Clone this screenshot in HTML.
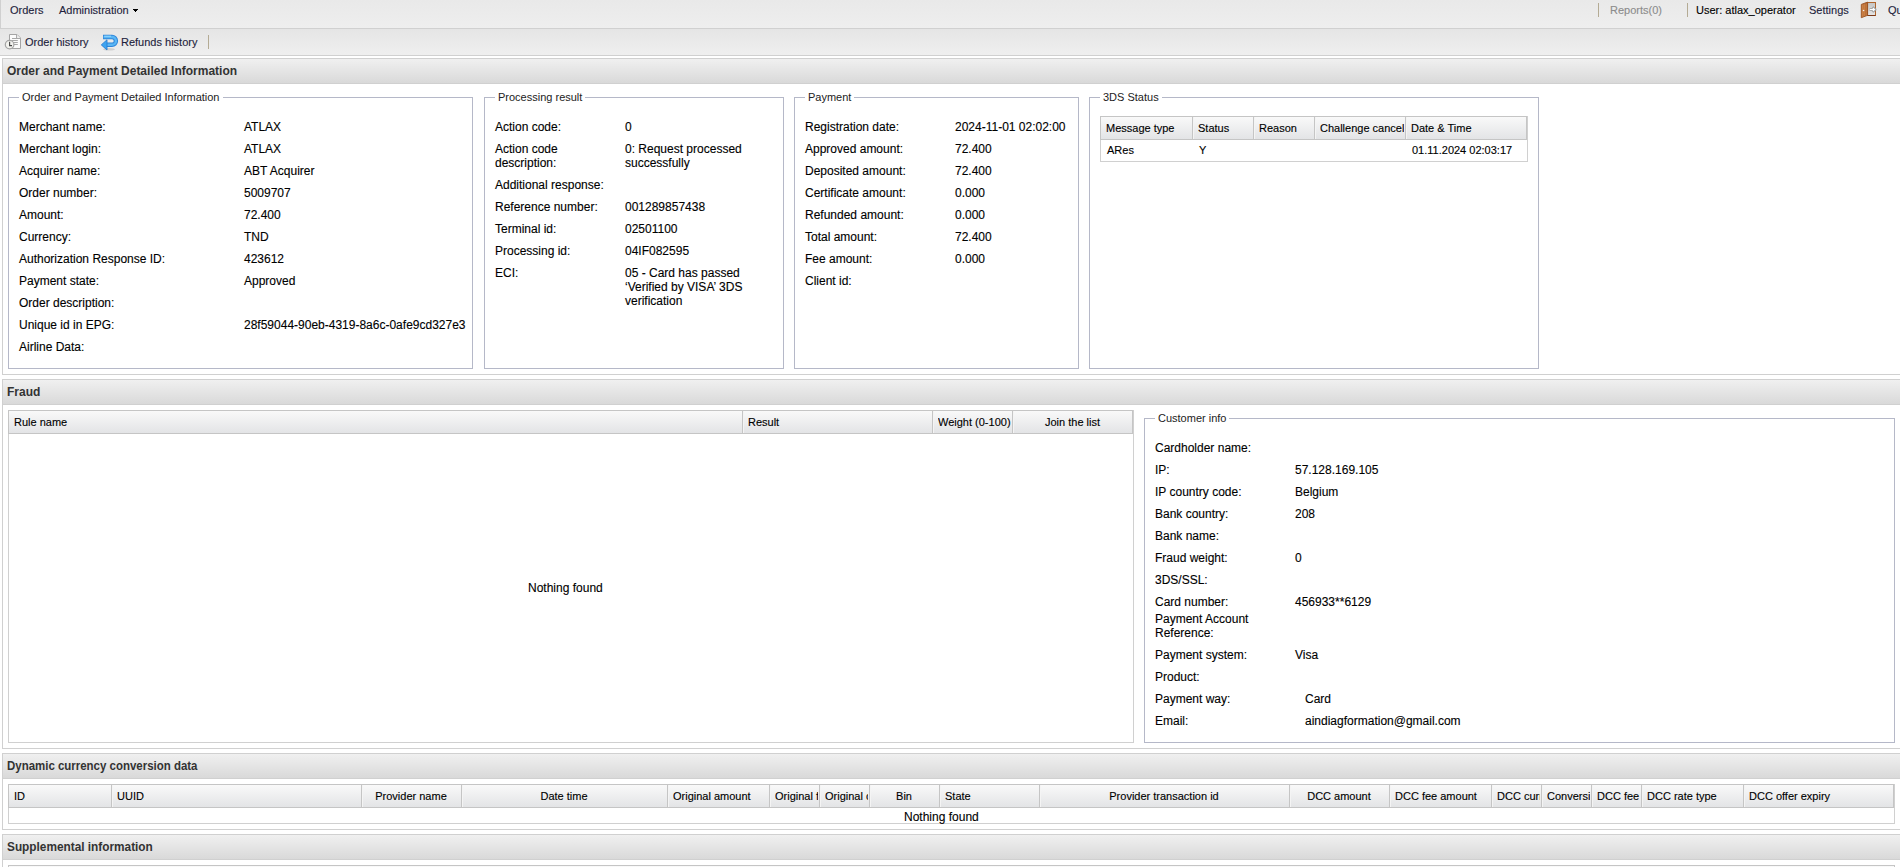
<!DOCTYPE html>
<html><head><meta charset="utf-8">
<style>
*{margin:0;padding:0;box-sizing:border-box}
html,body{width:1900px;height:867px;overflow:hidden;background:#fff;font-family:"Liberation Sans",sans-serif;font-size:12px;color:#000}
.a{position:absolute}
.t{position:absolute;white-space:nowrap;line-height:14px;font-size:12px;margin-top:-2px}
.s{position:absolute;white-space:nowrap;line-height:13px;font-size:11px;margin-top:-2px}
#menu{left:0;top:0;width:1900px;height:29px;background:linear-gradient(#e9e9e9,#eeeeee);border-left:1px solid #d0d0d0;border-bottom:1px solid #d0d0d0}
#tb{left:0;top:29px;width:1900px;height:27px;background:linear-gradient(#e5e5e5,#efefef);border-bottom:1px solid #d0d0d0}
.mt{color:#1e1e3c}
.pnl{position:absolute;left:2px;width:1898px;border:1px solid #d0d0d0;border-right:none;background:#fff}
.ph{position:absolute;left:0;top:0;right:0;height:25px;background:linear-gradient(#f0f0f0,#d9d9d9);border-bottom:1px solid #d0d0d0}
.ph span{position:absolute;left:4px;top:5px;font-weight:bold;font-size:12px;line-height:14px;color:#333;white-space:nowrap;transform-origin:0 0}
.fs{position:absolute;border:1px solid #b5b8c8}
.lg{position:absolute;background:#fff;padding:0 3px;font-size:11px;line-height:13px;color:#222;white-space:nowrap;margin-top:-3px}
.gh{position:absolute;background:linear-gradient(#f9f9f9,#e3e4e6);border:1px solid #c5c5c5}
.gb{position:absolute;border:1px solid #d0d0d0;background:#fff}
.cs{position:absolute;top:0;bottom:0;width:2px;border-left:1px solid #c5c5c5;border-right:1px solid #f4f4f4}
.t,.s{-webkit-text-stroke:0.12px currentColor}
.clip{position:absolute;overflow:hidden;height:16px}
.clip div{position:static;margin-top:0;padding-top:0}
</style></head><body>
<div id="menu" class="a"></div>
<div class="s mt" style="left:10px;top:6px;">Orders</div>
<div class="s mt" style="left:59px;top:6px;">Administration</div>
<div class="a" style="left:133px;top:9px;width:5px;height:1px;background:#000"></div><div class="a" style="left:134px;top:10px;width:3px;height:1px;background:#000"></div><div class="a" style="left:135px;top:11px;width:1px;height:1px;background:#000"></div>
<div class="a" style="left:1598px;top:3px;width:1px;height:14px;background:#b4ab94"></div>
<div class="s" style="left:1610px;top:6px;color:#8c8c8c">Reports(0)</div>
<div class="a" style="left:1687px;top:3px;width:1px;height:14px;background:#b4ab94"></div>
<div class="s" style="left:1696px;top:6px;color:#000">User: atlax_operator</div>
<div class="s mt" style="left:1809px;top:6px;">Settings</div>
<svg class="a" style="left:1860px;top:0px" width="18" height="20" viewBox="0 0 18 20">
 <defs><linearGradient id="fr" x1="0" y1="0" x2="0" y2="1"><stop offset="0" stop-color="#c4c4c4"/><stop offset="1" stop-color="#e6e6e6"/></linearGradient>
 <linearGradient id="dr" x1="0" y1="0" x2="1" y2="0"><stop offset="0" stop-color="#c87c42"/><stop offset="1" stop-color="#a85e2a"/></linearGradient></defs>
 <rect x="7.5" y="2.5" width="8" height="13" fill="url(#fr)" stroke="#b0652c"/>
 <path d="M7.5 15.5 H15.5" stroke="#7a3a1a"/>
 <path d="M1.3 4.4 L7.6 2.1 L7.6 15.3 L1.3 17.7 Z" fill="url(#dr)" stroke="#9a5224" stroke-width="0.9"/>
 <path d="M2.9 5 V16.6 M4.6 4.3 V16 M6.2 3.7 V15.5" stroke="#d89050" stroke-width="0.6"/>
 <circle cx="3.6" cy="10.5" r="0.8" fill="#f0f0f0"/>
 <path d="M9.6 9.5 H13.6 M12.4 7.3 L15.2 9.5 L12.4 11.7" stroke="#9c9c9c" stroke-width="2.6" fill="none" stroke-linejoin="round"/>
 <path d="M9.8 9.5 H14.4 M12.8 8 L14.6 9.5 L12.8 11" stroke="#ffffff" stroke-width="1.1" fill="none"/>
</svg>
<div class="s mt" style="left:1888px;top:6px;">Quit</div>
<div id="tb" class="a"></div>
<svg class="a" style="left:0px;top:30px" width="24" height="24" viewBox="0 0 24 24">
 <path d="M9.5 4.5 H17 L20.5 8 V18.5 H9.5 Z" fill="#fbfbfb" stroke="#a4a4a4"/>
 <path d="M16.6 4.5 V8.5 H20.5" fill="#f0f0f0" stroke="#a4a4a4"/>
 <path d="M12 8.5 H20 M12 10.5 H17.8 M13 12.5 H17.8 M14 14.5 H17.8" stroke="#a8a8a8"/>
 <circle cx="9.6" cy="14.6" r="4.3" fill="#f2f2ee" stroke="#a4a4a4" stroke-width="1.2"/>
 <path d="M9.6 11.8 V15.6 H12" stroke="#484848" stroke-width="1.15" fill="none"/>
</svg>
<div class="s mt" style="left:25px;top:38px;">Order history</div>
<svg class="a" style="left:98px;top:30px" width="24" height="24" viewBox="0 0 24 24">
 <ellipse cx="11" cy="19.3" rx="6" ry="1.2" fill="#000" opacity="0.12"/>
 <path d="M5 7 H14 A3.9 3.9 0 0 1 14 14.8 H8" stroke="#2f86da" stroke-width="4.4" fill="none"/>
 <path d="M5.6 7 H14 A3.9 3.9 0 0 1 14 14.8 H8" stroke="#5ab6f4" stroke-width="2.4" fill="none"/>
 <path d="M3.3 14.9 L9 9.8 L9 20 Z" fill="#3ea4f0" stroke="#2b7fd2" stroke-width="0.9" stroke-linejoin="round"/>
 <path d="M6.2 6.2 H13" stroke="#9ddcff" stroke-width="1" fill="none"/>
</svg>
<div class="s mt" style="left:121px;top:38px;">Refunds history</div>
<div class="a" style="left:208px;top:35px;width:1px;height:14px;background:#b4ab94"></div>
<div class="pnl" style="top:58px;height:317px"><div class="ph"><span>Order and Payment Detailed Information</span></div></div>
<div class="fs" style="left:8px;top:97px;width:465px;height:272px"></div>
<div class="lg" style="left:19px;top:94px">Order and Payment Detailed Information</div>
<div class="t" style="left:19px;top:122px;">Merchant name:</div>
<div class="t" style="left:244px;top:122px;">ATLAX</div>
<div class="t" style="left:19px;top:144px;">Merchant login:</div>
<div class="t" style="left:244px;top:144px;">ATLAX</div>
<div class="t" style="left:19px;top:166px;">Acquirer name:</div>
<div class="t" style="left:244px;top:166px;">ABT Acquirer</div>
<div class="t" style="left:19px;top:188px;">Order number:</div>
<div class="t" style="left:244px;top:188px;">5009707</div>
<div class="t" style="left:19px;top:210px;">Amount:</div>
<div class="t" style="left:244px;top:210px;">72.400</div>
<div class="t" style="left:19px;top:232px;">Currency:</div>
<div class="t" style="left:244px;top:232px;">TND</div>
<div class="t" style="left:19px;top:254px;">Authorization Response ID:</div>
<div class="t" style="left:244px;top:254px;">423612</div>
<div class="t" style="left:19px;top:276px;">Payment state:</div>
<div class="t" style="left:244px;top:276px;">Approved</div>
<div class="t" style="left:19px;top:298px;">Order description:</div>
<div class="t" style="left:19px;top:320px;">Unique id in EPG:</div>
<div class="t" style="left:244px;top:320px;">28f59044-90eb-4319-8a6c-0afe9cd327e3</div>
<div class="t" style="left:19px;top:342px;">Airline Data:</div>
<div class="fs" style="left:484px;top:97px;width:300px;height:272px"></div>
<div class="lg" style="left:495px;top:94px">Processing result</div>
<div class="t" style="left:495px;top:122px;">Action code:</div>
<div class="t" style="left:625px;top:122px;">0</div>
<div class="t" style="left:495px;top:144px;">Action code<br>description:</div>
<div class="t" style="left:625px;top:144px;">0: Request processed<br>successfully</div>
<div class="t" style="left:495px;top:180px;">Additional response:</div>
<div class="t" style="left:495px;top:202px;">Reference number:</div>
<div class="t" style="left:625px;top:202px;">001289857438</div>
<div class="t" style="left:495px;top:224px;">Terminal id:</div>
<div class="t" style="left:625px;top:224px;">02501100</div>
<div class="t" style="left:495px;top:246px;">Processing id:</div>
<div class="t" style="left:625px;top:246px;">04IF082595</div>
<div class="t" style="left:495px;top:268px;">ECI:</div>
<div class="t" style="left:625px;top:268px;">05 - Card has passed<br>‘Verified by VISA’ 3DS<br>verification</div>
<div class="fs" style="left:794px;top:97px;width:285px;height:272px"></div>
<div class="lg" style="left:805px;top:94px">Payment</div>
<div class="t" style="left:805px;top:122px;">Registration date:</div>
<div class="t" style="left:955px;top:122px;">2024-11-01 02:02:00</div>
<div class="t" style="left:805px;top:144px;">Approved amount:</div>
<div class="t" style="left:955px;top:144px;">72.400</div>
<div class="t" style="left:805px;top:166px;">Deposited amount:</div>
<div class="t" style="left:955px;top:166px;">72.400</div>
<div class="t" style="left:805px;top:188px;">Certificate amount:</div>
<div class="t" style="left:955px;top:188px;">0.000</div>
<div class="t" style="left:805px;top:210px;">Refunded amount:</div>
<div class="t" style="left:955px;top:210px;">0.000</div>
<div class="t" style="left:805px;top:232px;">Total amount:</div>
<div class="t" style="left:955px;top:232px;">72.400</div>
<div class="t" style="left:805px;top:254px;">Fee amount:</div>
<div class="t" style="left:955px;top:254px;">0.000</div>
<div class="t" style="left:805px;top:276px;">Client id:</div>
<div class="fs" style="left:1089px;top:97px;width:450px;height:272px"></div>
<div class="lg" style="left:1100px;top:94px">3DS Status</div>
<div class="gb" style="left:1100px;top:116px;width:428px;height:46px"></div>
<div class="gh" style="left:1100px;top:116px;width:427px;height:24px"><div class="cs" style="left:91px"></div><div class="cs" style="left:152px"></div><div class="cs" style="left:213px"></div><div class="cs" style="left:304px"></div></div>
<div class="clip" style="left:1106px;top:122px;width:85px"><div class="s">Message type</div></div>
<div class="clip" style="left:1198px;top:122px;width:54px"><div class="s">Status</div></div>
<div class="clip" style="left:1259px;top:122px;width:54px"><div class="s">Reason</div></div>
<div class="clip" style="left:1320px;top:122px;width:84px"><div class="s">Challenge cancel</div></div>
<div class="clip" style="left:1411px;top:122px;width:115px"><div class="s">Date &amp; Time</div></div>
<div class="s" style="left:1107px;top:146px;">ARes</div>
<div class="s" style="left:1199px;top:146px;">Y</div>
<div class="s" style="left:1412px;top:146px;">01.11.2024 02:03:17</div>
<div class="pnl" style="top:379px;height:370px"><div class="ph"><span>Fraud</span></div></div>
<div class="gb" style="left:8px;top:410px;width:1126px;height:333px"></div>
<div class="gh" style="left:8px;top:410px;width:1125px;height:24px"><div class="cs" style="left:733px"></div><div class="cs" style="left:923px"></div><div class="cs" style="left:1003px"></div></div>
<div class="clip" style="left:14px;top:416px;width:727px"><div class="s">Rule name</div></div>
<div class="clip" style="left:748px;top:416px;width:183px"><div class="s">Result</div></div>
<div class="clip" style="left:938px;top:416px;width:73px"><div class="s">Weight (0-100)</div></div>
<div class="clip" style="left:1012px;top:416px;width:121px;text-align:center"><div class="s">Join the list</div></div>
<div class="t" style="left:528px;top:583px;">Nothing found</div>
<div class="fs" style="left:1144px;top:418px;width:751px;height:325px"></div>
<div class="lg" style="left:1155px;top:415px">Customer info</div>
<div class="t" style="left:1155px;top:443px;">Cardholder name:</div>
<div class="t" style="left:1155px;top:465px;">IP:</div>
<div class="t" style="left:1295px;top:465px;">57.128.169.105</div>
<div class="t" style="left:1155px;top:487px;">IP country code:</div>
<div class="t" style="left:1295px;top:487px;">Belgium</div>
<div class="t" style="left:1155px;top:509px;">Bank country:</div>
<div class="t" style="left:1295px;top:509px;">208</div>
<div class="t" style="left:1155px;top:531px;">Bank name:</div>
<div class="t" style="left:1155px;top:553px;">Fraud weight:</div>
<div class="t" style="left:1295px;top:553px;">0</div>
<div class="t" style="left:1155px;top:575px;">3DS/SSL:</div>
<div class="t" style="left:1155px;top:597px;">Card number:</div>
<div class="t" style="left:1295px;top:597px;">456933**6129</div>
<div class="t" style="left:1155px;top:614px;">Payment Account<br>Reference:</div>
<div class="t" style="left:1155px;top:650px;">Payment system:</div>
<div class="t" style="left:1295px;top:650px;">Visa</div>
<div class="t" style="left:1155px;top:672px;">Product:</div>
<div class="t" style="left:1155px;top:694px;">Payment way:</div>
<div class="t" style="left:1305px;top:694px;">Card</div>
<div class="t" style="left:1155px;top:716px;">Email:</div>
<div class="t" style="left:1305px;top:716px;">aindiagformation@gmail.com</div>
<div class="pnl" style="top:753px;height:77px"><div class="ph"><span style="transform:scaleX(0.955)">Dynamic currency conversion data</span></div></div>
<div class="gb" style="left:8px;top:784px;width:1887px;height:40px"></div>
<div class="gh" style="left:8px;top:784px;width:1886px;height:24px"><div class="cs" style="left:102px"></div><div class="cs" style="left:352px"></div><div class="cs" style="left:452px"></div><div class="cs" style="left:658px"></div><div class="cs" style="left:760px"></div><div class="cs" style="left:810px"></div><div class="cs" style="left:860px"></div><div class="cs" style="left:930px"></div><div class="cs" style="left:1030px"></div><div class="cs" style="left:1280px"></div><div class="cs" style="left:1380px"></div><div class="cs" style="left:1482px"></div><div class="cs" style="left:1532px"></div><div class="cs" style="left:1582px"></div><div class="cs" style="left:1632px"></div><div class="cs" style="left:1734px"></div></div>
<div class="clip" style="left:14px;top:790px;width:96px"><div class="s">ID</div></div>
<div class="clip" style="left:117px;top:790px;width:243px"><div class="s">UUID</div></div>
<div class="clip" style="left:361px;top:790px;width:100px;text-align:center"><div class="s">Provider name</div></div>
<div class="clip" style="left:461px;top:790px;width:206px;text-align:center"><div class="s">Date time</div></div>
<div class="clip" style="left:673px;top:790px;width:95px"><div class="s">Original amount</div></div>
<div class="clip" style="left:775px;top:790px;width:43px"><div class="s">Original fee</div></div>
<div class="clip" style="left:825px;top:790px;width:43px"><div class="s">Original currency</div></div>
<div class="clip" style="left:869px;top:790px;width:70px;text-align:center"><div class="s">Bin</div></div>
<div class="clip" style="left:945px;top:790px;width:93px"><div class="s">State</div></div>
<div class="clip" style="left:1039px;top:790px;width:250px;text-align:center"><div class="s">Provider transaction id</div></div>
<div class="clip" style="left:1289px;top:790px;width:100px;text-align:center"><div class="s">DCC amount</div></div>
<div class="clip" style="left:1395px;top:790px;width:95px"><div class="s">DCC fee amount</div></div>
<div class="clip" style="left:1497px;top:790px;width:43px"><div class="s">DCC currency</div></div>
<div class="clip" style="left:1547px;top:790px;width:43px"><div class="s">Conversion rate</div></div>
<div class="clip" style="left:1597px;top:790px;width:43px"><div class="s">DCC fee</div></div>
<div class="clip" style="left:1647px;top:790px;width:95px"><div class="s">DCC rate type</div></div>
<div class="clip" style="left:1749px;top:790px;width:143px"><div class="s">DCC offer expiry</div></div>
<div class="t" style="left:904px;top:812px;">Nothing found</div>
<div class="pnl" style="top:834px;height:40px"><div class="ph"><span style="transform:scaleX(0.985)">Supplemental information</span></div></div>
<div class="gh" style="left:8px;top:865px;width:1887px;height:24px"></div>
</body></html>
